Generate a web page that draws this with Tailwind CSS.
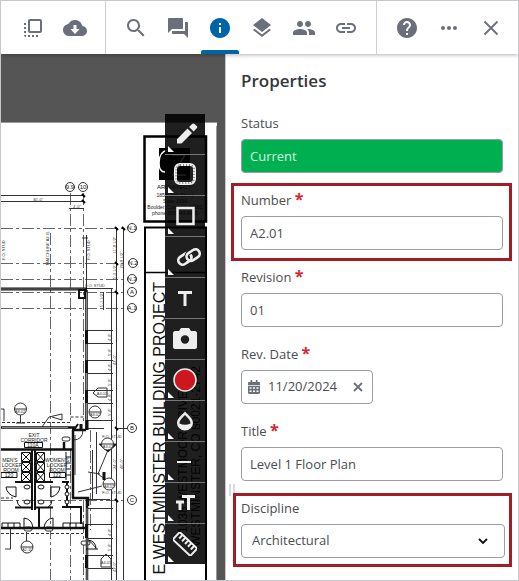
<!DOCTYPE html>
<html lang="en">
<head>
  <meta charset="UTF-8">
  <meta name="viewport" content="width=device-width, initial-scale=1.0">
  <title>Document Viewer - Properties</title>
  <script src="https://cdn.jsdelivr.net/npm/@tailwindcss/browser@4"></script>
</head>
<body class="bg-white font-['Open_Sans','Noto_Sans',sans-serif] text-[13px] text-[#4b4d52]">
<div class="flex flex-col min-h-screen border border-[#c8c8ca] overflow-hidden">

  <!-- Top bar -->
  <header class="relative z-10 flex h-[53px] shrink-0 bg-white text-[#6b6f7b] shadow-[0_1px_4px_rgba(0,0,0,0.3)]">
    <div class="flex items-center pl-[11px] pr-[9px] border-r border-[#cfcfd3]">
      <button aria-label="Pop out" class="flex w-[42px] h-full items-center justify-center">
        <svg class="size-6" viewBox="0 0 24 24" fill="currentColor"><path d="M3 13h2v-2H3v2zm0 4h2v-2H3v2zm2 4v-2H3c0 1.1.89 2 2 2zM3 9h2V7H3v2zm12 12h2v-2h-2v2zm4-18H9c-1.11 0-2 .9-2 2v10c0 1.1.89 2 2 2h10c1.1 0 2-.9 2-2V5c0-1.1-.9-2-2-2zm0 12H9V5h10v10zm-8 6h2v-2h-2v2zm-4 0h2v-2H7v2z"/></svg>
      </button>
      <button aria-label="Download" class="flex w-[42px] h-full items-center justify-center">
        <svg class="size-6" viewBox="0 0 24 24"><path fill="currentColor" d="M19.35 10.04C18.67 6.59 15.64 4 12 4 9.11 4 6.6 5.64 5.35 8.04 2.34 8.36 0 10.91 0 14c0 3.31 2.69 6 6 6h13c2.76 0 5-2.24 5-5 0-2.64-2.05-4.78-4.65-4.96z"/><path fill="#fff" d="M10.5 9h3v4h3L12 18l-4.500-5h3z"/></svg>
      </button>
    </div>
    <div class="flex flex-1 items-center pl-[9px] pr-[9px] border-r border-[#cfcfd3]">
      <button aria-label="Search" class="flex w-[42px] h-full items-center justify-center">
        <svg class="size-6" viewBox="0 0 24 24" fill="currentColor"><path d="M15.500 14h-.79l-.28-.27C15.410 12.590 16 11.110 16 9.500 16 5.910 13.090 3 9.500 3S3 5.910 3 9.500 5.910 16 9.500 16c1.610 0 3.090-.59 4.230-1.570l.27.28v.79l5 4.990L20.490 19l-4.990-5zm-6 0C7.010 14 5 11.990 5 9.500S7.010 5 9.500 5 14 7.010 14 9.500 11.990 14 9.500 14z"/></svg>
      </button>
      <button aria-label="Discussions" class="flex w-[42px] h-full items-center justify-center">
        <svg class="size-6" viewBox="0 0 24 24" fill="currentColor"><path d="M21 6h-2v9H6v2c0 .55.45 1 1 1h11l4 4V7c0-.55-.45-1-1-1zm-4 6V3c0-.55-.45-1-1-1H3c-.55 0-1 .45-1 1v14l4-4h10c.55 0 1-.45 1-1z"/></svg>
      </button>
      <button aria-label="Properties" aria-pressed="true" class="relative flex w-[42px] h-full items-center justify-center text-[#0064a8]">
        <svg class="size-6" viewBox="0 0 24 24" fill="currentColor"><path d="M12 2C6.480 2 2 6.480 2 12s4.480 10 10 10 10-4.480 10-10S17.520 2 12 2zm1 15h-2v-6h2v6zm0-8h-2V7h2v2z"/></svg>
        <span class="absolute bottom-0 inset-x-[2px] h-1 rounded-t-xs bg-[#0064a8]"></span>
      </button>
      <button aria-label="Layers" class="flex w-[42px] h-full items-center justify-center">
        <svg class="size-6" viewBox="0 0 24 24" fill="currentColor"><path d="M11.990 18.540l-7.370-5.730L3 14.070l9 7 9-7-1.630-1.270-7.380 5.740zM12 16l7.360-5.730L21 9l-9-7-9 7 1.630 1.270L12 16z"/></svg>
      </button>
      <button aria-label="People" class="flex w-[42px] h-full items-center justify-center">
        <svg class="size-6" viewBox="0 0 24 24" fill="currentColor"><path d="M16 11c1.660 0 2.990-1.340 2.990-3S17.660 5 16 5c-1.660 0-3 1.340-3 3s1.340 3 3 3zm-8 0c1.660 0 2.990-1.340 2.990-3S9.660 5 8 5C6.340 5 5 6.340 5 8s1.340 3 3 3zm0 2c-2.330 0-7 1.170-7 3.500V19h14v-2.500c0-2.330-4.670-3.500-7-3.500zm8 0c-.29 0-.62.02-.97.050 1.160.84 1.970 1.970 1.970 3.450V19h6v-2.500c0-2.330-4.670-3.500-7-3.500z"/></svg>
      </button>
      <button aria-label="Links" class="flex w-[42px] h-full items-center justify-center">
        <svg class="size-6" viewBox="0 0 24 24" fill="currentColor"><path d="M3.900 12c0-1.710 1.390-3.100 3.100-3.100h4V7H7c-2.760 0-5 2.240-5 5s2.240 5 5 5h4v-1.900H7c-1.710 0-3.100-1.390-3.100-3.100zM8 13h8v-2H8v2zm9-6h-4v1.900h4c1.710 0 3.100 1.390 3.100 3.100s-1.390 3.100-3.100 3.100h-4V17h4c2.760 0 5-2.240 5-5s-2.240-5-5-5z"/></svg>
      </button>
    </div>
    <div class="flex items-center pl-[9px] pr-[6px]">
      <button aria-label="Help" class="flex w-[42px] h-full items-center justify-center">
        <svg class="size-6" viewBox="0 0 24 24" fill="currentColor"><path d="M12 2C6.480 2 2 6.480 2 12s4.480 10 10 10 10-4.480 10-10S17.520 2 12 2zm1 17h-2v-2h2v2zm2.070-7.750l-.9.920C13.450 12.900 13 13.500 13 15h-2v-.5c0-1.100.45-2.100 1.170-2.830l1.240-1.260c.37-.36.59-.86.59-1.410 0-1.100-.9-2-2-2s-2 .9-2 2H8c0-2.210 1.790-4 4-4s4 1.790 4 4c0 .88-.36 1.680-.93 2.250z"/></svg>
      </button>
      <button aria-label="More" class="flex w-[42px] h-full items-center justify-center">
        <svg class="size-6" viewBox="0 0 24 24" fill="currentColor"><path d="M6 10c-1.100 0-2 .9-2 2s.9 2 2 2 2-.9 2-2-.9-2-2-2zm12 0c-1.100 0-2 .9-2 2s.9 2 2 2 2-.9 2-2-.9-2-2-2zm-6 0c-1.100 0-2 .9-2 2s.9 2 2 2 2-.9 2-2-.9-2-2-2z"/></svg>
      </button>
      <button aria-label="Close" class="flex w-[42px] h-full items-center justify-center">
        <svg class="size-6" viewBox="0 0 24 24" fill="none" stroke="currentColor" stroke-width="1.800"><path d="M5.500 5.500l13 13M18.500 5.500l-13 13"/></svg>
      </button>
    </div>
  </header>

  <main class="flex flex-1">
    <!-- Drawing -->
    <section class="relative flex-1 overflow-hidden bg-[#555]">
      <svg class="absolute inset-0 size-full" font-family="Liberation Sans, sans-serif" fill="#111">
        <g transform="translate(-1 -54)">
          <path fill="#fff" d="M0 122h217v480H0z"/>
          <path stroke="#999" d="M216.500 126v460M0 122.500h217" fill="none"/>

          <!-- Title block -->
          <g fill="none" stroke="#000" stroke-width="2">
            <path stroke-width="2.500" d="M144.500 136.500h61.500v85h-61.500z"/>
            <path d="M145 600V227.500h61V600"/>
            <path stroke-width="1.500" d="M145 272.500h61"/>
          </g>
          <path fill="#000" d="M159 148h31v32h-31z"/>
          <path d="M168 150c-6 1-9 6-9 13s3 9 6 9M172 155h13l-12 20h13" fill="none" stroke="#fff" stroke-width="1.500"/>
          <text x="157" y="189" font-size="6">ARCHITECT</text>
          <g font-size="5" text-anchor="middle" fill="#222">
            <text x="175" y="197">1855 29th Street</text>
            <text x="175" y="203">Suite 3354</text>
            <text x="175" y="209">Boulder, Colorado 80301</text>
            <text x="175" y="215">phone 303.444.8600</text>
          </g>
          <text transform="translate(165 282) rotate(-90)" text-anchor="end" font-size="16">E WESTMINSTER BUILDING PROJECT</text>
          <text transform="translate(187 391) rotate(-90)" text-anchor="end" font-size="12">1038 WESTMOOR DRIVE</text>
          <text transform="translate(200 366) rotate(-90)" text-anchor="end" font-size="12">WESTMINSTER, CO 80021-2742</text>

          <!-- Grid lines -->
          <g fill="none" stroke="#666" stroke-dasharray="12 3 3 3" stroke-width="1">
            <path d="M1 228.500h126M1 263.500h126M1 279.500h126M1 292.500h126M1 308.500h126M1 500.500h126"/>
            <path d="M70.500 193v230M83.500 193v230M50.500 233v350M70.500 450v130M83.500 500v80M90.500 430v100"/>
          </g>
          <g fill="none" stroke="#333" stroke-width="1">
            <path d="M1 195.500h83M1 201.500h83M69 208.500h15M86.500 235v55M116.500 228v353M123.500 228v353M111.500 288v293M103.500 292v18M82 238h6M87 288.500h26M116 428.500h11M88 428.500h16"/>
            <path d="M88 330.500h25M88 343.500h25M88 360.500h25M88 373.500h25M88 390.500h25M88 403.500h25M88 420.500h25M88 508.500h25M88 524.500h25M88 538.500h25M88 555.500h25M88 568.500h25M88 499.500h22"/>
            <path d="M20.500 415v8M16 423h9M26.500 541v-9M10.500 529v20M5 549h6M1 409h3v12"/>
            <path d="M2 422.500h68M1 533.500h82M70.500 417h17M1 498h12" stroke-dasharray="3 2"/>
            <path d="M42 427l7-10 13-3v6l-10-3M93 393l5-5h9v9h-9zM101 559l5-5 5 5v8h-10zM100 474l-12-2M98 474l10-24M98 474l8 6M78 492l24-6"/>
            <path d="M75 475v-40M96.500 432v62M92.500 450v50M89 540l7 8M73 440q10 0 10-10"/>
          </g>
          <g fill="#fff" stroke="#333" stroke-width="1">
            <circle cx="70" cy="187" r="4.500"/><circle cx="83" cy="187" r="4.500"/>
            <circle cx="132" cy="228" r="4.500"/><circle cx="133" cy="263" r="4.500"/><circle cx="132" cy="279" r="4.500"/><circle cx="132" cy="292" r="4.500"/><circle cx="132" cy="308" r="4.500"/><circle cx="132" cy="428" r="4.500"/><circle cx="132" cy="500" r="4.500"/>
            <circle cx="20.500" cy="409" r="6"/><circle cx="95" cy="412" r="6"/><circle cx="27" cy="547" r="6"/><circle cx="109" cy="484" r="6"/>
            <path fill="#000" d="M99 444h18l-9 8z"/>
            <circle cx="107.500" cy="444" r="6"/>
            <path d="M14.500 409h12M89 412h12M21 547h12M103 484h12M101.500 444h12"/>
            <rect x="62" y="437" width="8" height="4" rx="2"/><rect x="81" y="541" width="9" height="4" rx="2"/><rect x="24" y="527" width="8" height="4" rx="2"/><rect x="45" y="527" width="8" height="4" rx="2"/>
          </g>
          <g font-size="6" text-anchor="middle">
            <text x="70" y="189">9.9</text><text x="83" y="189">10</text>
            <text x="132" y="230">N.1</text><text x="133" y="265">N.2</text><text x="132" y="281">N.3</text><text x="132" y="294">A</text><text x="132" y="310">A.1</text><text x="132" y="430">B</text><text x="132" y="502">C</text>
          </g>
          <path d="M115 227l3 3M115 262l3 3M115 291l3 3M122 227l3 3M115 427l3 3M115 499l3 3M82 194l3 3M82 200l3 3" stroke="#000" stroke-width="2"/>

          <!-- Walls -->
          <g fill="none" stroke="#111">
            <path stroke-width="3" d="M1 289h86"/>
            <path stroke="#777" stroke-width="1" d="M1 289h84"/>
            <path stroke-width="2.500" d="M86.500 290v140M1 427.500h74M73 430v68M1 449.500h72M64 450v-8M87 499v82M72 498h16v8M1 528h84M72 430h14"/>
            <path stroke="#888" stroke-width="1" d="M86.500 292v136M87 508v72M2 427.500h66"/>
            <path stroke-width="3" d="M86.500 330v14M86.500 360v13M86.500 390v13M81 424v6M87 420v10M86.500 524v14M86.500 555v13M104 472v8"/>
            <path stroke-width="2" d="M32 450v60M35 450v60M15 482h16M35 482h18M15 507.500h17M35 507.500h18M67 482v26M62 482h7M62 507h18M81 506v18M39 508v20M79 290h6v8h-6zM78 424l-4 6h10"/>
            <path stroke-width="1" d="M21.500 452.500h9v9h-9zM21.500 462.500h9v9h-9zM21.500 472.500h9v9h-9zM36.500 452.500h8v9h-8zM36.500 462.500h8v9h-8zM36.500 472.500h8v9h-8zM22 453l8 8m0-8l-8 8M22 463l8 8m0-8l-8 8M22 473l8 8m0-8l-8 8M37 453l7 8m0-8l-7 8M37 463l7 8m0-8l-7 8M37 473l7 8m0-8l-7 8"/>
            <path stroke-width="1" d="M66 452v28M66 457h5M66 463h5M66 469h5M66 475h5M6 487h10v10q-9-2-10-10M60 487h-9v10q8-2 9-10M24 528v-10q8 1 9 10M53 528v-10q-8 1-9 10M17 500q0 5 4 7M52 500q0 5-4 7M2 528v-5h18v5M63 528v-5h20v5M8 523v5M14 523v5M70 523v5M76 523v5M86 549h12M88 540q8 1 8 9"/>
          </g>
          <g fill="#fff" stroke="#111">
            <circle cx="67" cy="487" r="2"/><circle cx="67" cy="494" r="2"/><circle cx="67" cy="502" r="2"/>
            <ellipse cx="27" cy="487" rx="3" ry="2"/><ellipse cx="41" cy="487" rx="3" ry="2"/><ellipse cx="27" cy="502" rx="3" ry="2"/><ellipse cx="41" cy="502" rx="3" ry="2"/>
            <path stroke-width="1" d="M24.500 442.500h18v5h-18zM1 472.500h16v5H1zM49.500 472.500h16v5h-16z"/>
          </g>
          <g font-size="5" text-anchor="middle" fill="#222">
            <text x="34" y="437">EXIT</text><text x="34" y="442">CORRIDOR</text><text x="33" y="447">110A</text>
            <text x="10" y="462">MEN'S</text><text x="12" y="467">LOCKER</text><text x="11" y="472">ROOM</text><text x="9" y="477">120</text>
            <text x="57" y="462">WOMEN'S</text><text x="57" y="467">LOCKER</text><text x="57" y="472">ROOM</text><text x="57" y="477">122</text>
          </g>
          <g font-size="4" text-anchor="middle" fill="#333">
            <text x="38" y="201">30'-0"</text><text x="77" y="208">4'-0"</text><text x="95" y="287">F.O. STUD</text><text x="112" y="438">F.O. STUD</text><text x="112" y="494">F.O. STUD</text>
            <text x="20" y="413">A8.02</text><text x="95" y="416">A8.02</text><text x="102" y="395">A4.02</text><text x="108" y="448">A3.02</text><text x="109" y="488">A8.02</text><text x="27" y="551">A2.11</text><text x="106" y="564">A4.01</text>
            <text transform="translate(49 248) rotate(-90)">MATCHLINE A2.01</text>
            <text transform="translate(90 250) rotate(-90)">F.O. STUD</text>
            <text transform="translate(5 250) rotate(-90)">F.O. STUD</text>
            <text transform="translate(116 245) rotate(-90)">11'-8 1/2"</text><text transform="translate(123 260) rotate(-90)">20'-8 1/2"</text>
            <text transform="translate(116 272) rotate(-90)">5'-3 1/2"</text><text transform="translate(103 300) rotate(-90)">5'-1 1/2"</text>
            <text transform="translate(111 337) rotate(-90)">4'-8"</text><text transform="translate(111 352) rotate(-90)">5'-8"</text><text transform="translate(111 367) rotate(-90)">4'-8"</text><text transform="translate(111 382) rotate(-90)">5'-8"</text><text transform="translate(111 397) rotate(-90)">4'-8"</text><text transform="translate(111 412) rotate(-90)">5'-8"</text>
            <text transform="translate(116 360) rotate(-90)">42'-0"</text><text transform="translate(116 464) rotate(-90)">24'-0"</text><text transform="translate(123 464) rotate(-90)">46'-0"</text>
            <text transform="translate(111 532) rotate(-90)">4'-8"</text><text transform="translate(111 547) rotate(-90)">5'-8"</text><text transform="translate(116 567) rotate(-90)">42'-0"</text>
          </g>
        </g>
      </svg>

      <!-- Markup tools -->
      <div class="absolute top-[60px] right-5 w-10 flex flex-col bg-black/88 text-[#eee] divide-y divide-[#777]">
        <button aria-label="Pen" class="relative flex h-[41px] items-center justify-center pl-1">
          <svg class="size-6" viewBox="0 0 24 24" fill="currentColor"><path d="M2 17.200V21.500h4.500L17 11l-4.500-4.500zM21.700 6.300c.8-.8.8-1.600 0-2.300L19.500 2c-.8-.8-1.700-.8-2.400 0l-3 3 4.500 4.500z"/></svg>
          <svg class="absolute left-[3px] bottom-[2px] size-[6px]" viewBox="0 0 6 6"><path fill="#fff" d="M0 0v6h6z"/></svg>
        </button>
        <button aria-label="Cloud" class="relative flex h-[41px] items-center justify-center pb-[2px]">
          <svg class="size-6" viewBox="0 0 24 24" fill="none"><rect x="2.500" y="2.500" width="19" height="19" rx="4.500" stroke="currentColor" stroke-width="3"/><rect x="3" y="3" width="18" height="18" rx="4" stroke="#222" stroke-width="1" stroke-dasharray="1 2"/></svg>
          <svg class="absolute left-[3px] bottom-[2px] size-[6px]" viewBox="0 0 6 6"><path fill="#fff" d="M0 0v6h6z"/></svg>
        </button>
        <button aria-label="Rectangle" class="relative flex h-[41px] items-center justify-center">
          <svg class="size-6" viewBox="0 0 24 24" fill="none"><path stroke="currentColor" stroke-width="2.500" d="M4.500 4h16v16h-16z"/></svg>
          <svg class="absolute left-[3px] bottom-[2px] size-[6px]" viewBox="0 0 6 6"><path fill="#fff" d="M0 0v6h6z"/></svg>
        </button>
        <button aria-label="Hyperlink" class="relative flex h-[41px] items-center justify-center pl-2">
          <svg class="size-[26px]" viewBox="0 0 26 26" fill="none"><g transform="rotate(-34 13 13)"><rect x="1.500" y="8" width="14" height="8.500" rx="4.200" stroke="currentColor" stroke-width="2.600"/><rect x="10.500" y="9.500" width="14" height="8.500" rx="4.200" stroke="#1f1f1f" stroke-width="4.500"/><rect x="10.500" y="9.500" width="14" height="8.500" rx="4.200" stroke="currentColor" stroke-width="2.600"/><path stroke="currentColor" stroke-width="2.600" d="M8 16.500h3.300a4.200 4.200 0 004.200-4.200"/></g></svg>
          <svg class="absolute left-[3px] bottom-[2px] size-[6px]" viewBox="0 0 6 6"><path fill="#fff" d="M0 0v6h6z"/></svg>
        </button>
        <button aria-label="Text" class="relative flex h-[41px] items-center justify-center">
          <svg class="size-6" viewBox="0 0 24 24" fill="none" stroke="currentColor" stroke-width="3"><path d="M5 6.500h14M12 6v14"/></svg>
        </button>
        <button aria-label="Photo" class="relative flex h-[41px] items-center justify-center">
          <svg class="size-[26px]" viewBox="0 0 26 26"><path fill="currentColor" d="M9 2h8l2 3h4c1 0 2 1 2 2v14c0 1-1 2-2 2H3c-1 0-2-1-2-2V7c0-1 1-2 2-2h4z"/><circle cx="13" cy="13.500" r="4.200" fill="#1f1f1f"/></svg>
        </button>
        <button aria-label="Colour" class="relative flex h-[41px] items-center justify-center">
          <svg class="size-6" viewBox="0 0 24 24"><circle cx="12" cy="12" r="11" fill="#cc1720" stroke="#eee" stroke-width="1.500"/></svg>
          <svg class="absolute left-[3px] bottom-[2px] size-[6px]" viewBox="0 0 6 6"><path fill="#fff" d="M0 0v6h6z"/></svg>
        </button>
        <button aria-label="Opacity" class="relative flex h-[41px] items-center justify-center">
          <svg class="size-6" viewBox="0 0 24 24"><path fill="currentColor" d="M12 2.500c-3.500 4-8 7-8 11.500a8 7.500 0 0016 0c0-4.500-4.500-7.500-8-11.500z"/><path fill="#1f1f1f" d="M12 6c-2.500 3-5.500 5-5.500 8.500q5.500 2.500 11 0C17.500 11 14.500 9 12 6z"/></svg>
          <svg class="absolute left-[3px] bottom-[2px] size-[6px]" viewBox="0 0 6 6"><path fill="#fff" d="M0 0v6h6z"/></svg>
        </button>
        <button aria-label="Line width" class="relative flex h-[41px] items-center justify-center">
          <svg class="size-6" viewBox="0 0 24 24"><path fill="currentColor" d="M4 11h14v2H4z"/></svg>
          <svg class="absolute left-[3px] bottom-[2px] size-[6px]" viewBox="0 0 6 6"><path fill="#fff" d="M0 0v6h6z"/></svg>
        </button>
        <button aria-label="Text size" class="relative flex h-[41px] items-center justify-center">
          <svg class="size-6" viewBox="0 0 24 24" fill="none" stroke="currentColor" stroke-width="3"><path d="M9 5.500h13M15.500 5v14M3 11h8M7 10.500V19"/></svg>
          <svg class="absolute left-[3px] bottom-[2px] size-[6px]" viewBox="0 0 6 6"><path fill="#fff" d="M0 0v6h6z"/></svg>
        </button>
        <button aria-label="Measure" class="relative flex h-10 items-center justify-center">
          <svg class="size-6" viewBox="0 0 24 24" fill="none" stroke="currentColor" stroke-width="2"><g transform="rotate(43 12 12)"><rect x="0" y="7" width="24" height="10" rx="1"/><path d="M4 7v5M8 7v5M12 7v5M16 7v5M20 7v5"/></g></svg>
          <svg class="absolute left-[3px] bottom-[2px] size-[6px]" viewBox="0 0 6 6"><path fill="#fff" d="M0 0v6h6z"/></svg>
        </button>
      </div>
    </section>

    <!-- Properties panel -->
    <aside class="relative w-[293px] shrink-0 border-l border-[#c8c8ca] bg-white px-[15px] pt-[13px] pb-[22px]">
      <div class="absolute left-[3px] top-[430px] w-[6px] h-3 border-x-2 border-[#d9dbe0]"></div>
      <h1 class="mb-4 text-[17px] leading-7 font-semibold text-[#35373b]">Properties</h1>
      <form class="flex flex-col gap-[15px]">
        <div class="flex flex-col gap-1">
          <label for="status" class="h-6 leading-6">Status</label>
          <input id="status" value="Current" readonly class="h-[34px] rounded-sm border border-[#9a9bab] bg-[#00b050] px-2 text-[#d5f3e1]">
        </div>
        <div class="relative flex flex-col gap-1">
          <label for="number" class="h-6 leading-6">Number <span class="text-base leading-none font-bold text-[#d9232e]">*</span></label>
          <input id="number" value="A2.01" class="h-[34px] rounded-sm border border-[#9a9bab] px-2">
          <div class="absolute -left-[10px] -right-[9px] -top-[5px] -bottom-[11px] border-3 border-[#a31c26] pointer-events-none"></div>
        </div>
        <div class="flex flex-col gap-1">
          <label for="revision" class="h-6 leading-6">Revision <span class="text-base leading-none font-bold text-[#d9232e]">*</span></label>
          <input id="revision" value="01" class="h-[34px] rounded-sm border border-[#9a9bab] px-2">
        </div>
        <div class="flex flex-col gap-1">
          <label for="date" class="h-6 leading-6">Rev. Date <span class="text-base leading-none font-bold text-[#d9232e]">*</span></label>
          <div class="flex w-[132px] h-[34px] items-center rounded-sm border border-[#9a9bab] px-[6px]">
            <svg class="w-3 h-[14px] shrink-0 mr-2" viewBox="0 0 12 14"><path fill="#6b6f7b" d="M0 5V3.200C0 2.500.5 2 1.200 2H2.500V0h1.700v2h3.600V0h1.700v2h1.300c.7 0 1.200.5 1.200 1.200V5zM0 5.800h12v7c0 .7-.5 1.200-1.200 1.200H1.200C.5 14 0 13.500 0 12.800z"/><path fill="#fff" d="M1.500 7.200h2v1.600h-2zM5 7.200h2v1.600H5zM8.500 7.200h2v1.600h-2zM1.500 10.400h2V12h-2zM5 10.400h2V12H5zM8.500 10.400h2V12h-2z"/></svg>
            <input id="date" value="11/20/2024" class="min-w-0 flex-1">
            <button type="button" aria-label="Clear date" class="ml-1 mr-[3px]">
              <svg class="size-[10px]" viewBox="0 0 10 10" fill="none" stroke="#6b6f7b" stroke-width="1.800"><path d="M1 1l8 8M9 1L1 9"/></svg>
            </button>
          </div>
        </div>
        <div class="flex flex-col gap-1">
          <label for="title" class="h-6 leading-6">Title <span class="text-base leading-none font-bold text-[#d9232e]">*</span></label>
          <input id="title" value="Level 1 Floor Plan" class="h-[34px] rounded-sm border border-[#9a9bab] px-2">
        </div>
        <div class="relative flex flex-col gap-1">
          <label for="discipline" class="h-6 leading-6">Discipline</label>
          <div class="relative -mr-[2px]">
            <select id="discipline" class="appearance-none w-full h-[34px] rounded-sm border border-[#9a9bab] px-[10px]">
              <option>Architectural</option>
            </select>
            <svg class="absolute right-[17px] top-[14px] w-[10px] h-[7px] pointer-events-none" viewBox="0 0 10 7" fill="none" stroke="#111" stroke-width="1.800"><path d="M1 1l4 4 4-4"/></svg>
          </div>
          <div class="absolute -left-2 -right-[9px] -top-[3px] -bottom-[9px] border-3 border-[#a31c26] pointer-events-none"></div>
        </div>
      </form>
    </aside>
  </main>
</div>
</body>
</html>
